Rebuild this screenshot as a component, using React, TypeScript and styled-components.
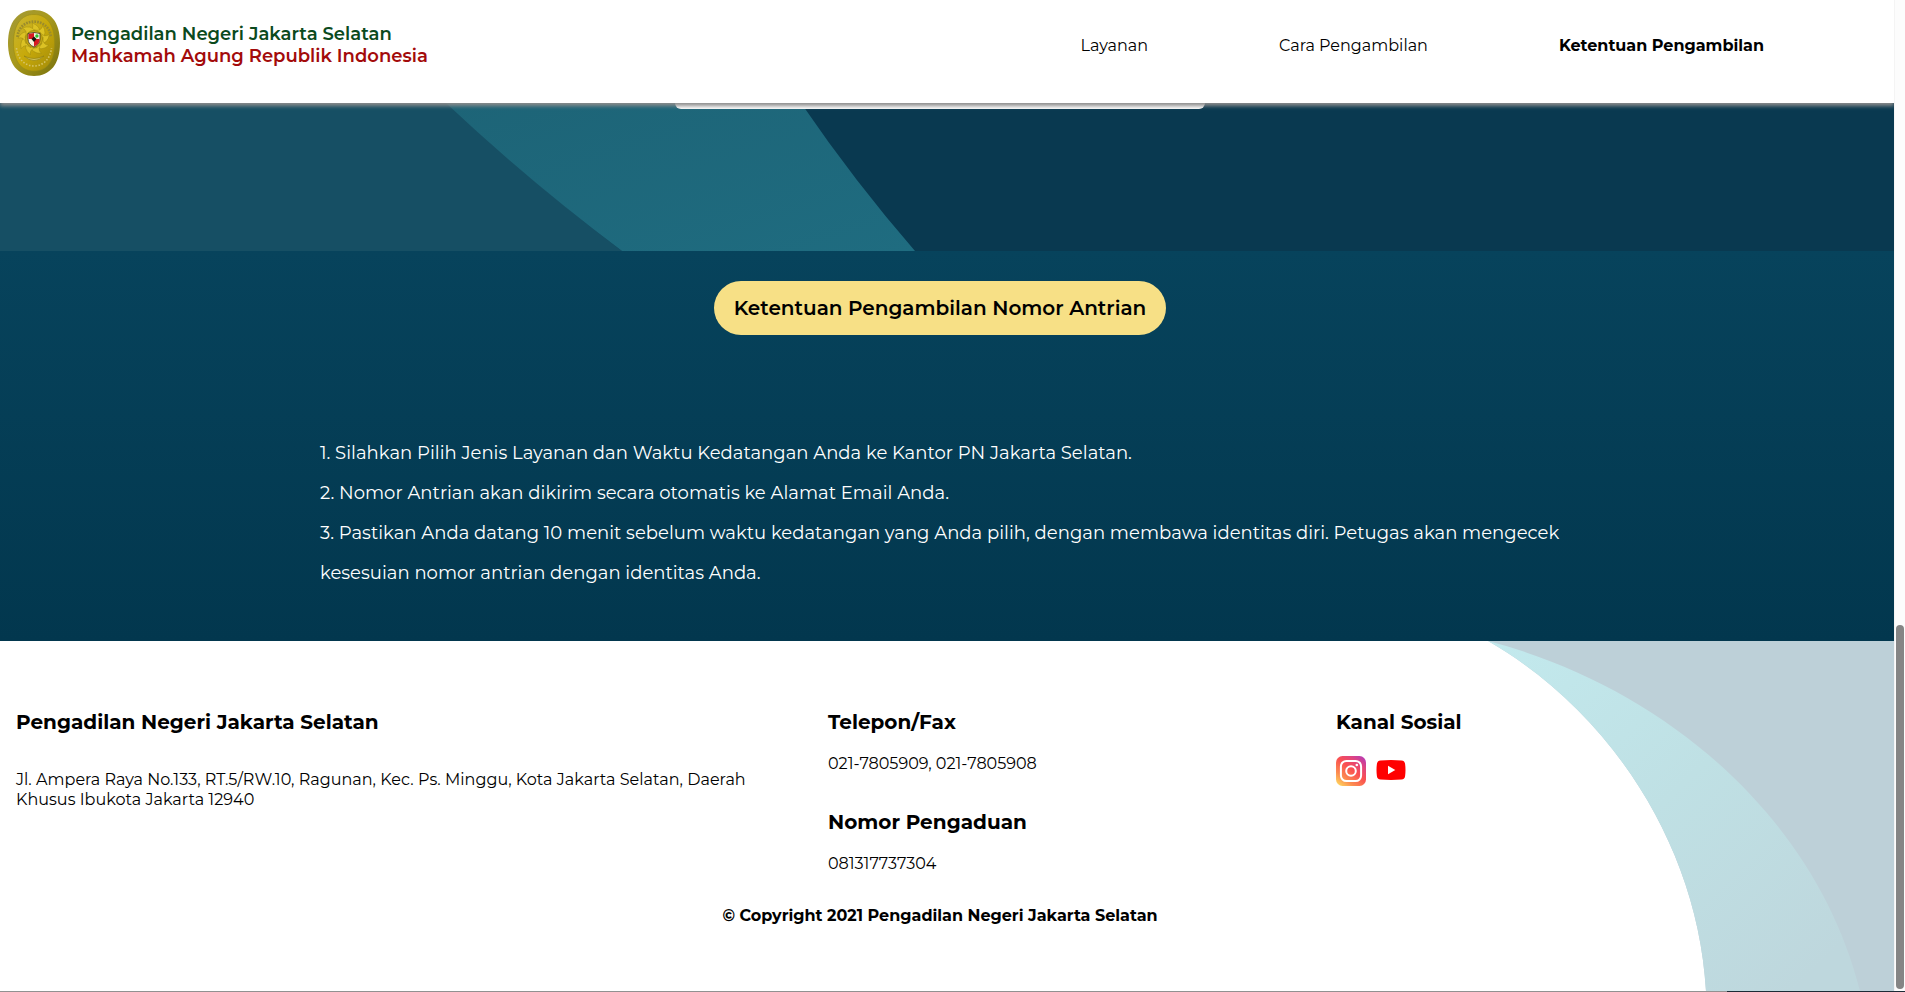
import React from 'react';
import styled, { createGlobalStyle } from 'styled-components';

const GlobalStyle = createGlobalStyle`
  *, *::before, *::after { box-sizing: border-box; }
  html, body { margin: 0; padding: 0; overflow: hidden; }
  body {
    background: #fff;
    color: #000;
    font-family: Montserrat, Inter, "Noto Sans", sans-serif;
    font-size: 16px;
  }
`;

const Window = styled.div`
  display: grid;
  grid-template-columns: 1fr 11px;
  grid-template-rows: 991px 1px;
  height: 992px;
  overflow: hidden;
`;

const Page = styled.div`
  display: flex;
  flex-direction: column;
  min-width: 0;
  overflow: hidden;
`;

const Header = styled.header`
  position: relative;
  z-index: 1;
  display: flex;
  justify-content: space-between;
  height: 103px;
  padding: 10px 130px 0 8px;
  background: #fff;
  box-shadow: 0 3px 4px #8c8c8c;
`;

const Brand = styled.div`
  display: flex;
  gap: 11px;
`;

const BrandText = styled.div`
  display: flex;
  flex-direction: column;
  padding-top: 13px;
  font-size: 18px;
  font-weight: 600;
  line-height: 22px;
`;

const BrandLine = styled.span<{ $color: string }>`
  color: ${({ $color }) => $color};
  white-space: nowrap;
`;

const Nav = styled.nav`
  display: flex;
  gap: 131px;
  padding-top: 25px;
  line-height: 21px;
`;

const NavLink = styled.span<{ $active?: boolean }>`
  font-weight: ${({ $active }) => ($active ? 700 : 400)};
  white-space: nowrap;
`;

const Band = styled.section`
  display: grid;
  height: 148px;
  background: #093950;

  > * { grid-area: 1 / 1; }
`;

const BandShapes = styled.svg`
  display: block;
  width: 1894px;
  height: 148px;
`;

const CardEdge = styled.div`
  width: 530px;
  height: 6px;
  margin-left: 675px;
  border-radius: 0 0 10px 10px;
  background: #fff;
`;

const Rules = styled.section`
  display: flex;
  flex-direction: column;
  align-items: center;
  height: 390px;
  padding-top: 30px;
  background: linear-gradient(#07435c, #02374e);
`;

const RulesTitle = styled.h2`
  width: 452px;
  margin: 0 14px 0 0;
  border-radius: 27px;
  background: #f7e086;
  font-size: 20px;
  font-weight: 600;
  line-height: 54px;
  text-align: center;
  white-space: nowrap;
`;

const RulesList = styled.div`
  width: 1254px;
  margin-top: 98px;
  color: #fff;
  font-size: 18px;
  letter-spacing: 0.027px;
  line-height: 40px;
`;

const Rule = styled.p`
  margin: 0;
`;

const Footer = styled.footer`
  position: relative;
  height: 350px;
  padding: 69px 16px 0;
  background: #fff;
`;

const FooterShapes = styled.svg`
  position: absolute;
  top: 0;
  right: 0;
  width: 410px;
  height: 350px;
`;

const Columns = styled.div`
  display: grid;
  grid-template-columns: 812px 508px 1fr;
  height: 196px;
`;

const Column = styled.div`
  line-height: 20px;
`;

const Heading = styled.h3<{ $gap: number }>`
  margin: 0 0 ${({ $gap }) => $gap}px;
  font-size: 20px;
  font-weight: 700;
  line-height: 24px;
`;

const Address = styled.p`
  width: 760px;
  margin: 0;
  letter-spacing: 0.025px;
`;

const Phone = styled.div`
  height: 56px;
`;

const Socials = styled.div`
  display: flex;
  gap: 10px;
  padding-top: 3px;
`;

const SocialIcon = styled.svg`
  display: block;
  width: 30px;
  height: 30px;
`;

const Copyright = styled.div`
  margin-right: 14px;
  font-weight: 700;
  line-height: 20px;
  text-align: center;
`;

const Scrollbar = styled.div`
  display: flex;
  align-items: flex-end;
  padding: 0 1px 2px 1px;
  border-left: 1px solid #f4f4f4;
  background: #fcfcfc;
`;

const Thumb = styled.div`
  width: 8px;
  height: 364px;
  border-radius: 4px;
  background: #858585;
`;

const BottomEdge = styled.div`
  grid-column: 1 / -1;
  background: linear-gradient(to right, #919191 0 1727px, #1c2b36 1727px);
`;

const RAYS = Array.from({ length: 9 }, (_, i) => i * 40);

function Emblem() {
  return (
    <svg width="52" height="66" viewBox="0 0 52 66">
      <defs>
        <linearGradient id="rim" x1="0" y1="0" x2="1" y2="1">
          <stop offset="0" stopColor="#a39a38" />
          <stop offset=".45" stopColor="#a8991d" />
          <stop offset="1" stopColor="#77700c" />
        </linearGradient>
        <linearGradient id="face" x1="0" y1="0" x2="1" y2="1">
          <stop offset="0" stopColor="#c9b634" />
          <stop offset=".5" stopColor="#c7a90a" />
          <stop offset="1" stopColor="#a18a09" />
        </linearGradient>
      </defs>
      <path d="M26 0C42 0 52 12 52 33S42 66 26 66 0 54 0 33 10 0 26 0Z" fill="url(#rim)" />
      <path d="M26 4.500C39 4.500 46.500 15 46.500 33S39 61 26 61 5.500 51 5.500 33 13 4.500 26 4.500Z" fill="url(#face)" stroke="#9b8b12" strokeWidth=".6" />
      <path d="M9.500 27C11 6.500 41 6.500 43 27" fill="none" stroke="#9a8b2c" strokeWidth="2.600" strokeDasharray="1.700 1.100" />
      <path d="M8.500 38C11 62 41 62 43.500 38" fill="none" stroke="#d5c467" strokeWidth="1.600" strokeDasharray="1.500 1.700" />
      <path d="M16 46Q26 55 36 46Q26 51 16 46Z" fill="#d3c356" stroke="#8a7a11" strokeWidth=".6" />
      <g fill="#dcc224" stroke="#a08b10" strokeWidth=".5">
        {RAYS.map((a) => (
          <path key={a} d="M20 22Q27 19 24 13Q33 16 32 24Z" transform={`rotate(${a} 26 29)`} />
        ))}
      </g>
      <circle cx="26" cy="29" r="8.500" fill="#c7a914" stroke="#927f0b" strokeWidth=".7" />
      <path d="M20 23.500Q26 21.500 32 23.500V29Q32 34.500 26 37Q20 34.500 20 29Z" fill="#f5f1dc" stroke="#39301c" strokeWidth=".8" />
      <path d="M20.500 24L26 23V29H20.500Z" fill="#d71920" />
      <path d="M26 29H31.500V30Q31.500 34 26 36.500Z" fill="#d71920" />
      <circle cx="28.900" cy="26" r="1.700" fill="#28c42d" />
      <path d="M26 26.500L28.500 29L26 32L23.500 29Z" fill="#171510" />
    </svg>
  );
}

function InstagramIcon() {
  return (
    <SocialIcon viewBox="0 0 30 30">
      <defs>
        <linearGradient id="ig" x1=".1" y1="1" x2=".9" y2="0">
          <stop offset="0" stopColor="#ffd65e" />
          <stop offset=".25" stopColor="#fc8b50" />
          <stop offset=".55" stopColor="#fa4f50" />
          <stop offset=".78" stopColor="#e1457d" />
          <stop offset="1" stopColor="#b63bb5" />
        </linearGradient>
      </defs>
      <rect width="30" height="30" rx="6.500" fill="url(#ig)" />
      <rect x="4.900" y="4.900" width="20.200" height="20.200" rx="5.500" fill="none" stroke="#fff" strokeWidth="2" />
      <circle cx="15" cy="15" r="4.800" fill="none" stroke="#fff" strokeWidth="2" />
      <circle cx="20.800" cy="9" r="1.300" fill="#fff" />
    </SocialIcon>
  );
}

function YouTubeIcon() {
  return (
    <SocialIcon viewBox="0 0 30 30">
      <path d="M4.500 4.400Q15 3.500 25.500 4.400Q28.800 4.700 29.100 8Q29.900 14 29.100 20Q28.800 23.300 25.500 23.600Q15 24.500 4.500 23.600Q1.200 23.300.9 20Q.1 14 .9 8Q1.200 4.700 4.500 4.400Z" fill="#f00" />
      <path d="M12 9.800V18.200L19.300 14Z" fill="#fff" />
    </SocialIcon>
  );
}

const rules = [
  '1. Silahkan Pilih Jenis Layanan dan Waktu Kedatangan Anda ke Kantor PN Jakarta Selatan.',
  '2. Nomor Antrian akan dikirim secara otomatis ke Alamat Email Anda.',
  '3. Pastikan Anda datang 10 menit sebelum waktu kedatangan yang Anda pilih, dengan membawa identitas diri. Petugas akan mengecek kesesuian nomor antrian dengan identitas Anda.',
];

export default function App() {
  return (
    <>
      <GlobalStyle />
      <Window>
        <Page>
          <Header>
            <Brand>
              <Emblem />
              <BrandText>
                <BrandLine $color="#0b4a1d">Pengadilan Negeri Jakarta Selatan</BrandLine>
                <BrandLine $color="#a30b0b">Mahkamah Agung Republik Indonesia</BrandLine>
              </BrandText>
            </Brand>
            <Nav>
              <NavLink>Layanan</NavLink>
              <NavLink>Cara Pengambilan</NavLink>
              <NavLink $active>Ketentuan Pengambilan</NavLink>
            </Nav>
          </Header>
          <Band>
            <BandShapes viewBox="0 0 1894 148">
              <defs>
                <linearGradient id="stripe" x1="0" y1="0" x2="1" y2="1">
                  <stop offset="0" stopColor="#1d6477" />
                  <stop offset="1" stopColor="#1f6c80" />
                </linearGradient>
              </defs>
              <path d="M0 0H450Q530 79 622 148H0Z" fill="#164f64" />
              <path d="M446 0H801Q855 79 915 148H622Q530 79 446 0Z" fill="url(#stripe)" />
            </BandShapes>
            <CardEdge />
          </Band>
          <Rules>
            <RulesTitle>Ketentuan Pengambilan Nomor Antrian</RulesTitle>
            <RulesList>
              {rules.map((text) => (
                <Rule key={text}>{text}</Rule>
              ))}
            </RulesList>
          </Rules>
          <Footer>
            <FooterShapes viewBox="0 0 410 350">
              <defs>
                <linearGradient id="wave" gradientUnits="userSpaceOnUse" x1="20" y1="0" x2="330" y2="330">
                  <stop offset="0" stopColor="#c2e9ed" />
                  <stop offset=".5" stopColor="#bfe0e4" />
                  <stop offset="1" stopColor="#bed7dd" />
                </linearGradient>
              </defs>
              <path d="M4 0H410V350H222C214 205 126 70 4 0Z" fill="#bdd0d8" />
              <path d="M4 0C180 46 332 176 376 350H222C214 205 126 70 4 0Z" fill="url(#wave)" />
            </FooterShapes>
            <Columns>
              <Column>
                <Heading $gap={36}>Pengadilan Negeri Jakarta Selatan</Heading>
                <Address>
                  Jl. Ampera Raya No.133, RT.5/RW.10, Ragunan, Kec. Ps. Minggu, Kota Jakarta Selatan, Daerah
                  Khusus Ibukota Jakarta 12940
                </Address>
              </Column>
              <Column>
                <Heading $gap={20}>Telepon/Fax</Heading>
                <Phone>021-7805909, 021-7805908</Phone>
                <Heading $gap={20}>Nomor Pengaduan</Heading>
                <Phone>081317737304</Phone>
              </Column>
              <Column>
                <Heading $gap={19}>Kanal Sosial</Heading>
                <Socials>
                  <InstagramIcon />
                  <YouTubeIcon />
                </Socials>
              </Column>
            </Columns>
            <Copyright>© Copyright 2021 Pengadilan Negeri Jakarta Selatan</Copyright>
          </Footer>
        </Page>
        <Scrollbar>
          <Thumb />
        </Scrollbar>
        <BottomEdge />
      </Window>
    </>
  );
}
